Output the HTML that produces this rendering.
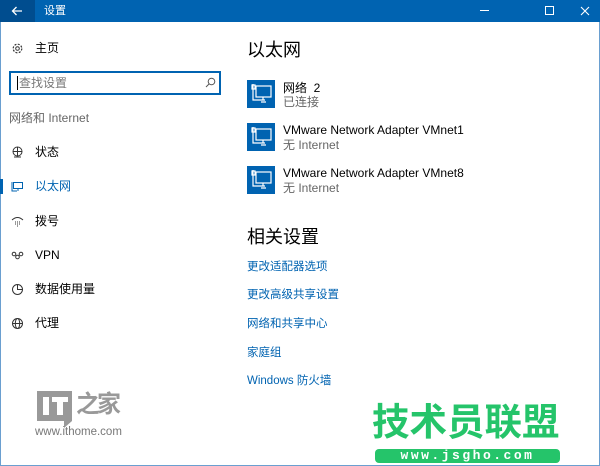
<!DOCTYPE html>
<html><head><meta charset="utf-8"><style>
*{margin:0;padding:0;box-sizing:border-box}
body{width:600px;height:466px;overflow:hidden;background:#fff;font-family:"Liberation Sans","Noto Sans CJK SC",sans-serif;position:relative;color:#000}
.a{position:absolute;white-space:nowrap}
.tb{left:0;top:0;width:600px;height:22px;background:#0063b1}
.back{left:0;top:0;width:35px;height:22px;background:#004d8f}
.bl{left:0;top:22px;width:1px;height:444px;background:#6a9fd0}
.br{right:0;top:22px;width:1px;height:444px;background:#6a9fd0}
.bb{left:0;bottom:0;width:600px;height:1px;background:#6a9fd0}
.n{font-size:12px;left:35px;line-height:14px}
.lk{font-size:11.5px;color:#0063b1;left:247px;line-height:14px}
.ic{width:28px;height:28px;background:#0063b1;left:247px}
.t1{font-size:12px;left:283px;line-height:14px}
.t2{font-size:12px;left:283px;color:#666;line-height:14px}
</style></head><body>
<div class="a tb"></div><div class="a back"></div>
<svg class="a" style="left:11px;top:5px" width="12" height="12" viewBox="0 0 12 12"><path d="M11 6H1.5M5.5 2L1.5 6L5.5 10" stroke="#fff" stroke-width="1.3" fill="none"/></svg>
<div class="a" style="left:44px;top:4px;font-size:11px;color:#fff;line-height:14px">设置</div>
<div class="a" style="left:480px;top:10px;width:9px;height:1px;background:#fff"></div>
<div class="a" style="left:545px;top:6px;width:9px;height:9px;border:1px solid #fff"></div>
<svg class="a" style="left:580px;top:6px" width="10" height="10"><path d="M1 1L9 9M9 1L1 9" stroke="#fff" stroke-width="1.1"/></svg>
<div class="a bl"></div><div class="a br"></div><div class="a bb"></div>

<svg class="a" style="left:11px;top:42px" width="13" height="13" viewBox="0 0 13 13"><circle cx="6.5" cy="6.5" r="4.3" stroke="#333" stroke-width="1.2" fill="none" stroke-dasharray="2 1.4"/><circle cx="6.5" cy="6.5" r="1.8" stroke="#333" fill="none"/></svg>
<div class="a n" style="top:41px">主页</div>
<div class="a" style="left:9px;top:71px;width:212px;height:24px;border:2px solid #0063b1"></div>
<div class="a" style="left:17px;top:76px;width:1px;height:14px;background:#000"></div>
<div class="a" style="left:19px;top:76px;font-size:12px;color:#777;line-height:14px">查找设置</div>
<svg class="a" style="left:205px;top:77px" width="11" height="11"><circle cx="6.5" cy="4.5" r="3.3" stroke="#555" fill="none"/><path d="M4 7L1 10" stroke="#555"/></svg>
<div class="a" style="left:9px;top:111px;font-size:12px;color:#666;line-height:14px">网络和 Internet</div>
<svg class="a" style="left:11px;top:146px" width="13" height="13"><circle cx="6.5" cy="5.5" r="4.5" stroke="#333" fill="none"/><path d="M2 5.5H11M6.5 1V10M3 11H10" stroke="#333"/></svg>
<div class="a n" style="top:145px">状态</div>
<div class="a" style="left:0;top:179px;width:3px;height:15px;background:#0063b1"></div>
<svg class="a" style="left:11px;top:180px" width="13" height="13"><rect x="2.5" y="2.5" width="9" height="6" stroke="#0063b1" fill="none"/><path d="M1 2V11H6M7 9V11" stroke="#0063b1" fill="none"/></svg>
<div class="a n" style="top:179px;color:#0063b1">以太网</div>
<svg class="a" style="left:11px;top:215px" width="13" height="13"><path d="M1 5Q6.5 0 12 5" stroke="#333" fill="none"/><path d="M4 7h1M6 7h1M8 7h1M4 9h1M6 9h1M8 9h1M6 11h1" stroke="#333"/></svg>
<div class="a n" style="top:214px">拨号</div>
<svg class="a" style="left:11px;top:249px" width="13" height="13"><circle cx="3" cy="5" r="1.8" stroke="#333" fill="none"/><circle cx="10" cy="5" r="1.8" stroke="#333" fill="none"/><circle cx="6.5" cy="8" r="1.8" stroke="#333" fill="none"/></svg>
<div class="a n" style="top:248px">VPN</div>
<svg class="a" style="left:11px;top:283px" width="13" height="13"><circle cx="6.5" cy="6.5" r="5" stroke="#333" fill="none"/><path d="M6.5 1.5V6.5H11.5" stroke="#333" fill="none"/></svg>
<div class="a n" style="top:282px">数据使用量</div>
<svg class="a" style="left:11px;top:317px" width="13" height="13"><circle cx="6.5" cy="6.5" r="5" stroke="#333" fill="none"/><ellipse cx="6.5" cy="6.5" rx="2.2" ry="5" stroke="#333" fill="none"/><path d="M1.5 6.5H11.5" stroke="#333"/></svg>
<div class="a n" style="top:316px">代理</div>

<div class="a" style="left:247px;top:39px;font-size:18px;line-height:22px">以太网</div>
<div class="a ic" style="top:80px"></div>
<div class="a ic" style="top:123px"></div>
<div class="a ic" style="top:166px"></div>
<svg class="a" style="left:247px;top:80px" width="28" height="114"><defs><g id="g" stroke="#fff" fill="none" stroke-width="1.2"><rect x="9" y="6" width="15" height="11"/><path d="M6 4V20H18M16 20V17M14 22H19M5 5h3v4h-3z"/></g></defs><use href="#g"/><use href="#g" y="43"/><use href="#g" y="86"/></svg>
<div class="a t1" style="top:81px">网络&nbsp;&nbsp;2</div>
<div class="a t2" style="top:95px">已连接</div>
<div class="a t1" style="top:123px">VMware Network Adapter VMnet1</div>
<div class="a t2" style="top:138px">无 Internet</div>
<div class="a t1" style="top:166px">VMware Network Adapter VMnet8</div>
<div class="a t2" style="top:181px">无 Internet</div>
<div class="a" style="left:247px;top:226px;font-size:18px;line-height:22px">相关设置</div>
<div class="a lk" style="top:260px">更改适配器选项</div>
<div class="a lk" style="top:288px">更改高级共享设置</div>
<div class="a lk" style="top:317px">网络和共享中心</div>
<div class="a lk" style="top:346px">家庭组</div>
<div class="a lk" style="top:374px">Windows 防火墙</div>

<div class="a" style="left:37px;top:391px;width:35px;height:30px;background:#999"></div>
<div class="a" style="left:43px;top:397px;width:6px;height:18px;background:#fff"></div>
<div class="a" style="left:52px;top:397px;width:16px;height:5px;background:#fff"></div>
<div class="a" style="left:57px;top:397px;width:6px;height:18px;background:#fff"></div>
<div class="a" style="left:64px;top:421px;width:0;height:0;border-left:8px solid #999;border-bottom:7px solid transparent"></div>
<div class="a" style="left:76px;top:390px;font-size:24px;color:#999;line-height:30px;font-weight:bold;letter-spacing:-3px">之家</div>
<div class="a" style="left:35px;top:425px;font-size:11.5px;color:#777;line-height:14px">www.ithome.com</div>

<div class="a" style="left:372px;top:399px;font-size:37.5px;font-weight:bold;color:#25c46a;line-height:46px">技术员联盟</div>
<div class="a" style="left:375px;top:449px;width:185px;height:14px;background:#25c46a;border-radius:4px"></div>
<div class="a" style="left:375px;top:449px;width:185px;font-size:13px;font-weight:bold;color:#fff;line-height:14px;text-align:center;letter-spacing:2.5px;font-family:'Liberation Mono',monospace">www.jsgho.com</div>
</body></html>
